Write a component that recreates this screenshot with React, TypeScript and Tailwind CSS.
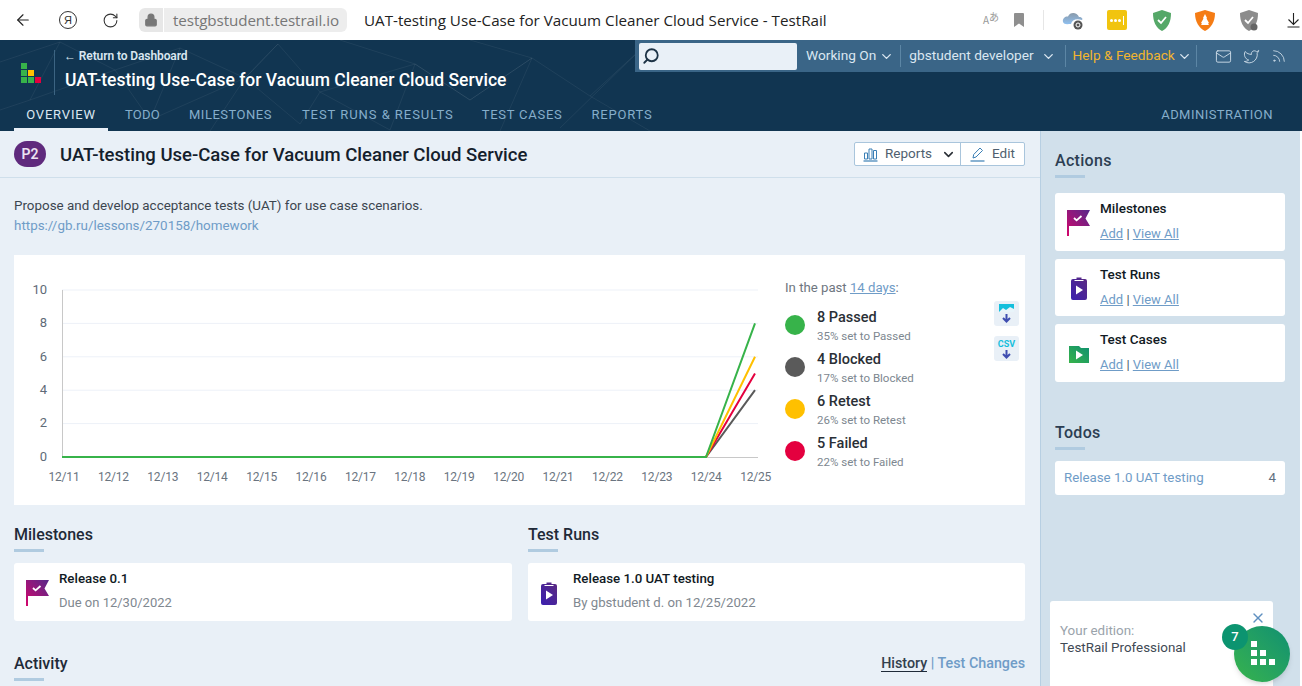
import React from "react";
import { ArrowLeft, RotateCw, Lock, ChevronDown, Search, Mail, Twitter, Rss, X } from "lucide-react";

const Flag = ({ id }: { id: string }) => (
  <svg width="23" height="26" viewBox="0 0 23 26" className="shrink-0">
    <defs>
      <linearGradient id={id} x1="0" y1="1" x2="1" y2="0">
        <stop offset="0" stopColor="#d4056c" />
        <stop offset="1" stopColor="#55298a" />
      </linearGradient>
    </defs>
    <path d="M0 0H23L18.5 8.500L23 16H2V26H0Z" fill={`url(#${id})`} />
    <path d="M7 8l2.600 2.400L14.500 6" fill="none" stroke="#fff" strokeWidth="1.800" />
  </svg>
);
const Clip = ({ id }: { id: string }) => (
  <svg width="16" height="23" viewBox="0 0 16 23" className="shrink-0">
    <defs>
      <linearGradient id={id} x1="0" y1="1" x2="1" y2="0">
        <stop offset="0" stopColor="#3b1fb0" />
        <stop offset="1" stopColor="#5b2a80" />
      </linearGradient>
    </defs>
    <path d="M2 2H5.500V0.500H10.500V2H14Q16 2 16 4V21Q16 23 14 23H2Q0 23 0 21V4Q0 2 2 2Z" fill={`url(#${id})`} />
    <rect x="3.500" y="3" width="9" height="1" fill="#fff" />
    <path d="M5 8.500L12 13L5 17.500Z" fill="#fff" />
  </svg>
);
const Folder = ({ id }: { id: string }) => (
  <svg width="20" height="17" viewBox="0 0 20 17" className="shrink-0">
    <defs>
      <linearGradient id={id} x1="0" y1="1" x2="1" y2="0">
        <stop offset="0" stopColor="#37b34a" />
        <stop offset="1" stopColor="#0f9070" />
      </linearGradient>
    </defs>
    <path d="M0 0H10L12 2H20V17H0Z" fill={`url(#${id})`} />
    <path d="M7 4.500L14 9L7 13.500Z" fill="#fff" />
  </svg>
);

const Heading = ({ children, side }: { children: React.ReactNode; side?: boolean }) => (
  <div>
    <div className={`translate-y-[1px] text-[16px] leading-[20px] font-medium ${side ? "tracking-[0.3px] text-[#2c3e52]" : "text-[#1f2a38]"}`}>{children}</div>
    <div className="mt-[5px] h-[3px] w-[30px] bg-[#b0cbe0]" />
  </div>
);

const ActionCard = ({ icon, title, short }: { icon: React.ReactNode; title: string; short?: boolean }) => (
  <div className={`flex items-start rounded-[3px] bg-white ${short ? "h-[57px]" : "h-[58px]"}`}>
    <div className="flex h-full w-[45px] shrink-0 items-center justify-center pt-[2px] pl-[2px]">{icon}</div>
    <div className="pt-[6px]">
      <div className="text-[13.500px] leading-[18px] font-medium text-[#111a24]">{title}</div>
      <div className="mt-[8px] text-[13px] leading-[18px] text-[#4a5a68]">
        <span className="text-[#6f9cc7] underline">Add</span> | <span className="text-[#6f9cc7] underline">View All</span>
      </div>
    </div>
  </div>
);

const days = ["12/11","12/12","12/13","12/14","12/15","12/16","12/17","12/18","12/19","12/20","12/21","12/22","12/23","12/24","12/25"];

const Chart = () => {
  const y = (v: number) => 202 - v * 16.7;
  return (
    <svg width="765" height="250" viewBox="0 0 765 250" className="shrink-0" fontFamily="Roboto, sans-serif">
      {[2, 4, 6, 8, 10].map((v) => (
        <line key={v} x1="48" x2="744" y1={y(v)} y2={y(v)} stroke="#edf1f8" />
      ))}
      <line x1="48.500" x2="48.500" y1="35" y2="202" stroke="#c8c8c8" />
      <line x1="48" x2="744" y1="202.500" y2="202.500" stroke="#c8c8c8" />
      {[0, 2, 4, 6, 8, 10].map((v) => (
        <text key={v} x="33" y={y(v) + 3.800} textAnchor="end" fontSize="13" fill="#5f6b78">{v}</text>
      ))}
      {days.map((d, i) => (
        <text key={d} x={50 + i * 49.4} y="226" textAnchor="middle" fontSize="12" letterSpacing="-0.200" fill="#6a7480">{d}</text>
      ))}
      <polyline points={`48,202 692,202 741,${y(4)}`} fill="none" stroke="#5a5a5a" strokeWidth="2" />
      <polyline points={`48,202 692,202 741,${y(5)}`} fill="none" stroke="#e4003f" strokeWidth="2" />
      <polyline points={`48,202 692,202 741,${y(6)}`} fill="none" stroke="#ffc000" strokeWidth="2" />
      <polyline points={`48,202 692,202 741,${y(8)}`} fill="none" stroke="#37b34a" strokeWidth="2" />
    </svg>
  );
};

const Legend = ({ color, title, sub }: { color: string; title: string; sub: string }) => (
  <div className="flex h-[42px] items-center">
    <div className="h-5 w-5 rounded-full" style={{ backgroundColor: color }} />
    <div className="ml-[12px] translate-y-[1px]">
      <div className="text-[14.500px] leading-[18px] font-medium text-[#2a2f36]">{title}</div>
      <div className="mt-[2px] text-[11.500px] leading-[14px] text-[#7d8790]">{sub}</div>
    </div>
  </div>
);

const Network = () => (
  <svg className="absolute inset-0 h-full w-full" viewBox="0 0 1302 91" preserveAspectRatio="none">
    <path
      d="M0 22L60 2L115 30L180 8L245 38L278 4L320 52L415 24L470 60L532 18L590 56L640 10L560 88M60 2L30 60L115 30L150 80L245 38L300 84L320 52L390 90L415 24L340 0M180 8L150 80M470 60L532 18L500 91M590 56L650 91M415 24L470 60M278 4L245 38M30 60L0 70M532 18L470 0M245 38L210 91"
      fill="none"
      stroke="#ffffff"
      strokeOpacity="0.06"
    />
  </svg>
);

const NavItem = ({ children, active, className }: { children: React.ReactNode; active?: boolean; className?: string }) => (
  <div className={`relative flex h-full items-center pb-[2px] text-[13px] whitespace-nowrap ${active ? "text-[#dce8f1]" : "text-[#86aecb]"} ${className ?? ""}`}>
    {children}
  </div>
);

const Sep = () => <div className="h-[22px] w-px bg-[#5c86a5]" />;

export default function App() {
  return (
    <div className="flex h-[686px] w-[1302px] flex-col overflow-hidden bg-white font-['Roboto',sans-serif]">
      {/* browser bar */}
      <div className="flex h-10 shrink-0 items-center bg-white font-['Open_Sans',sans-serif] text-[#333]">
        <ArrowLeft size={18} strokeWidth={1.5} className="ml-[14px] text-[#222]" />
        <div className="ml-[27px] flex h-[18px] w-[18px] items-center justify-center rounded-full border border-[#333] font-['Liberation_Sans',sans-serif] text-[11px] leading-none">Я</div>
        <RotateCw size={17} strokeWidth={1.5} className="ml-[25px] text-[#333]" />
        <div className="ml-[20px] flex h-6 w-[24px] items-center justify-center rounded-l-[6px] bg-[#e7e7e7]">
          <Lock size={14} fill="#777" strokeWidth={2} className="text-[#777]" />
        </div>
        <div className="ml-[1px] flex h-6 w-[183px] items-center rounded-r-[6px] bg-[#ededed] pl-[9px] text-[15.200px] tracking-[-0.100px] whitespace-nowrap text-[#777]">testgbstudent.testrail.io</div>
        <div className="ml-[17px] text-[15.200px] whitespace-nowrap text-[#222]">UAT-testing Use-Case for Vacuum Cleaner Cloud Service - TestRail</div>
        <div className="flex-1" />
        <div className="flex w-[17px] items-end font-['Noto_Sans_CJK_JP',sans-serif] leading-none text-[#999]">
          <span className="text-[10px]">A</span>
          <span className="-mt-[5px] mb-[3px] text-[10px]">あ</span>
        </div>
        <svg width="10" height="14" viewBox="0 0 10 14" className="ml-[14px]"><path d="M0 1Q0 0 1 0H9Q10 0 10 1V14L5 10.500L0 14Z" fill="#8f8f8f" /></svg>
        <div className="ml-[19px] h-[20px] w-px bg-[#e6e6e6]" />
        <svg width="22" height="20" viewBox="0 0 22 20" className="ml-[18px]">
          <defs>
            <linearGradient id="cl" x1="0" y1="0" x2="0" y2="1">
              <stop offset="0" stopColor="#8a9aaa" />
              <stop offset="1" stopColor="#8fc0f0" />
            </linearGradient>
          </defs>
          <path d="M1 12C0 8 4 6 6 6.500C8 1.500 15 2 17 7C20 7 21 9 20 10C14 8 10 10 9 14C6 14 2 15 1 12Z" fill="url(#cl)" />
          <circle cx="16" cy="15" r="4.500" fill="#555" />
          <circle cx="16" cy="15" r="2" fill="none" stroke="#fff" />
        </svg>
        <div className="ml-[23px] flex h-[20px] w-[20px] items-center justify-center gap-[1px] rounded-[2px] bg-[#f1c40f]">
          <span className="h-[3px] w-[3px] rounded-full bg-white" />
          <span className="h-[3px] w-[3px] rounded-full bg-white" />
          <span className="h-[3px] w-[3px] rounded-full bg-white" />
          <span className="ml-[1px] h-[9px] w-px bg-white" />
        </div>
        <svg width="20" height="21" viewBox="0 0 20 21" className="ml-[25px]">
          <path d="M1 3L10 0L19 3C19 12 16 18 10 21C4 18 1 12 1 3Z" fill="#55a868" />
          <path d="M6 10l3 3 5-6" fill="none" stroke="#fff" strokeWidth="1.800" />
        </svg>
        <svg width="20" height="21" viewBox="0 0 20 21" className="ml-[23px]">
          <path d="M0 3L10 0L20 3C20 12 16 18 10 21C4 18 0 12 0 3Z" fill="#f57c14" />
          <path d="M10 4L12 8L11.500 8.500L14 13L13 13.500L14 15H6L7 13.500L6 13L8.500 8.500L8 8Z" fill="#fff" />
        </svg>
        <svg width="20" height="21" viewBox="0 0 20 21" className="ml-[24px]">
          <path d="M1 3L10 0L19 3C19 12 16 18 10 21C4 18 1 12 1 3Z" fill="#8c8c8c" />
          <path d="M6 10l3 3 5-6" fill="none" stroke="#fff" strokeWidth="1.800" />
          <circle cx="15" cy="17" r="3.500" fill="#666" />
        </svg>
        <svg width="13" height="16" viewBox="0 0 13 16" className="mr-[2px] ml-[28px]">
          <path d="M6.500 1V12M1.500 7.500L6.500 12.500L11.500 7.500M0.500 15H12.500" fill="none" stroke="#222" strokeWidth="1.100" />
        </svg>
      </div>

      {/* app header */}
      <div className="relative h-[91px] shrink-0 bg-[#113551]">
        <Network />
        <div className="relative flex h-[60px] items-start">
          <div className="flex w-[635px] items-start">
            <div className="mt-[23px] ml-[21px] grid w-[20px] grid-cols-3 gap-[1px]">
              <span className="h-[6px] w-[6px] bg-[#37b34a]" />
              <span className="h-[6px] w-[6px]" />
              <span className="h-[6px] w-[6px]" />
              <span className="h-[6px] w-[6px] bg-[#37b34a]" />
              <span className="h-[6px] w-[6px] bg-[#ffc000]" />
              <span className="h-[6px] w-[6px]" />
              <span className="h-[6px] w-[6px] bg-[#37b34a]" />
              <span className="h-[6px] w-[6px] bg-[#37b34a]" />
              <span className="h-[6px] w-[6px] bg-[#e4003f]" />
            </div>
            <div className="mt-[10px] ml-[13px] h-[45px] w-px bg-[#3c6482]" />
            <div className="ml-[10px] pt-[9px]">
              <div className="-ml-[1px] text-[12px] leading-[14px] font-semibold tracking-[-0.100px] text-[#d9e6f0]">← Return to Dashboard</div>
              <div className="mt-[6px] text-[17.500px] leading-[22px] font-medium whitespace-nowrap text-white">UAT-testing Use-Case for Vacuum Cleaner Cloud Service</div>
            </div>
          </div>
          <div className="flex h-8 flex-1 items-center bg-[#3a6587] text-[13.700px] text-[#dbe7f1]">
            <div className="ml-[4px] flex h-[27px] w-[158px] items-center rounded-[2px] bg-[#e9f0f7] pl-[3px]">
              <Search size={18} strokeWidth={2.4} className="-scale-x-100 text-[#1d3346]" />
            </div>
            <span className="ml-[9px] pb-[2px] whitespace-nowrap">Working On</span>
            <ChevronDown size={15} strokeWidth={2.2} className="ml-[3px]" />
            <div className="ml-[6px]"><Sep /></div>
            <span className="ml-[8px] pb-[2px] whitespace-nowrap">gbstudent developer</span>
            <ChevronDown size={15} strokeWidth={2.2} className="ml-[7px]" />
            <div className="ml-[9px]"><Sep /></div>
            <span className="ml-[7px] pb-[2px] whitespace-nowrap text-[#f2b52e]">Help &amp; Feedback</span>
            <ChevronDown size={15} strokeWidth={2.2} className="ml-[2px]" />
            <div className="ml-[4px]"><Sep /></div>
            <Mail size={17} strokeWidth={1.2} className="ml-[18px]" />
            <Twitter size={17} strokeWidth={1.2} className="ml-[11px]" />
            <Rss size={16} strokeWidth={1.2} className="ml-[11px]" />
          </div>
        </div>
        <div className="relative flex h-[31px] items-center pl-[14px]">
          <NavItem active className="w-[94px] justify-center tracking-[0.8px]">
            OVERVIEW
            <span className="absolute inset-x-0 bottom-0 h-[3px] bg-[#e9f0f7]" />
          </NavItem>
          <NavItem className="ml-[17px] tracking-[0.25px]">TODO</NavItem>
          <NavItem className="ml-[29px] tracking-[0.5px]">MILESTONES</NavItem>
          <NavItem className="ml-[30px] tracking-[0.95px]">TEST RUNS &amp; RESULTS</NavItem>
          <NavItem className="ml-[28px] tracking-[0.75px]">TEST CASES</NavItem>
          <NavItem className="ml-[29px] tracking-[0.77px]">REPORTS</NavItem>
          <div className="flex-1" />
          <NavItem className="mr-[29px] tracking-[0.46px]">ADMINISTRATION</NavItem>
        </div>
      </div>

      {/* body */}
      <div className="relative flex min-h-0 flex-1">
        <div className="w-[1040px] shrink-0 overflow-hidden bg-[#e9f0f7]">
          <div className="flex h-[47px] items-center border-b border-[#cfdfeb] pr-[15px] pl-[14px]">
            <div className="flex h-[26px] w-[32px] items-center justify-center rounded-full bg-[#5f2a7d] text-[14px] font-semibold text-[#ece3f2]">P2</div>
            <div className="ml-[14px] pt-[4px] text-[18.550px] font-medium whitespace-nowrap text-[#14202c]">UAT-testing Use-Case for Vacuum Cleaner Cloud Service</div>
            <div className="flex-1" />
            <div className="flex h-6 items-center rounded-[2px] border border-[#a9c5dc] bg-white text-[13.500px] text-[#4f5f6f]">
              <div className="flex h-full w-[106px] items-center border-r border-[#a9c5dc] pl-[8px]">
                <svg width="15" height="16" viewBox="0 0 15 16" className="shrink-0">
                  <path d="M1.500 7H4.500V13H1.500ZM6 3H9V13H6ZM10.500 4.500H13.500V13H10.500Z" fill="none" stroke="#3b7fb5" />
                  <path d="M0.500 15H14.500" stroke="#3b7fb5" strokeWidth="1.200" />
                </svg>
                <span className="ml-[7px] pb-[2px]">Reports</span>
                <ChevronDown size={15} strokeWidth={2.5} className="ml-[9px] text-[#2a2f36]" />
              </div>
              <div className="flex h-full w-[63px] items-center pl-[9px]">
                <svg width="15" height="16" viewBox="0 0 15 16" className="shrink-0">
                  <path d="M3 12L3.700 8.500L10 2L12.500 4.500L6 11Z" fill="none" stroke="#3b7fb5" />
                  <path d="M0.500 15H14.500" stroke="#3b7fb5" strokeWidth="1.200" />
                </svg>
                <span className="ml-[7px] pb-[2px]">Edit</span>
              </div>
            </div>
          </div>

          <div className="pr-[15px] pl-[14px]">
            <div className="pt-[18px] text-[13.400px] leading-[20px] text-[#3c4650]">
              Propose and develop acceptance tests (UAT) for use case scenarios.
              <div className="text-[#6f9cc7]">https://gb.ru/lessons/270158/homework</div>
            </div>

            <div className="mt-[19px] flex h-[250px] bg-white">
              <Chart />
              <div className="w-[215px] shrink-0 pl-[6px]">
                <div className="pt-[25px] text-[13.200px] leading-[16px] text-[#6e7680]">
                  In the past <span className="text-[#6f9cc7] underline">14 days</span>:
                </div>
                <div className="mt-[8px]">
                  <Legend color="#37b34a" title="8 Passed" sub="35% set to Passed" />
                  <Legend color="#5a5a5a" title="4 Blocked" sub="17% set to Blocked" />
                  <Legend color="#ffc000" title="6 Retest" sub="26% set to Retest" />
                  <Legend color="#e4003f" title="5 Failed" sub="22% set to Failed" />
                </div>
              </div>
              <div className="flex flex-col gap-[10px] pt-[46px]">
                <div className="flex h-[25px] w-[25px] flex-col items-center justify-center rounded-[3px] bg-[#e9f0f7]">
                  <svg width="17" height="9" viewBox="0 0 17 9"><rect width="15" height="8" x="1" fill="#15bfdc" /><path d="M1 8L5 4L8 6L12 3L16 5V8Z" fill="#e8f4fa" /></svg>
                  <svg width="11" height="10" viewBox="0 0 11 10"><path d="M5.500 1V8M2 5l3.500 3.500L9 5" fill="none" stroke="#3f4db0" strokeWidth="2" /></svg>
                </div>
                <div className="flex h-[25px] w-[25px] flex-col items-center justify-center rounded-[3px] bg-[#e9f0f7]">
                  <span className="text-[9px] leading-[10px] font-bold text-[#15bfdc]">CSV</span>
                  <svg width="11" height="10" viewBox="0 0 11 10"><path d="M5.500 1V8M2 5l3.500 3.500L9 5" fill="none" stroke="#3f4db0" strokeWidth="2" /></svg>
                </div>
              </div>
            </div>

            <div className="mt-[19px] grid grid-cols-[498px_497px] gap-x-[16px]">
              <div>
                <Heading>Milestones</Heading>
                <div className="mt-[11px] flex h-[58px] items-start rounded-[3px] bg-white">
                  <div className="flex h-full w-[45px] shrink-0 items-center pt-[2px] pl-[12px]"><Flag id="f1" /></div>
                  <div className="pt-[7px]">
                    <div className="text-[13.300px] leading-[18px] font-medium text-[#111a24]">Release 0.1</div>
                    <div className="mt-[6px] text-[13px] leading-[18px] text-[#7f8890]">Due on 12/30/2022</div>
                  </div>
                </div>
              </div>
              <div>
                <Heading>Test Runs</Heading>
                <div className="mt-[11px] flex h-[58px] items-start rounded-[3px] bg-white">
                  <div className="flex h-full w-[45px] shrink-0 items-center pt-[2px] pl-[13px]"><Clip id="c1" /></div>
                  <div className="pt-[7px]">
                    <div className="text-[13.300px] leading-[18px] font-medium text-[#111a24]">Release 1.0 UAT testing</div>
                    <div className="mt-[6px] text-[13.200px] leading-[18px] text-[#7f8890]">By gbstudent d. on 12/25/2022</div>
                  </div>
                </div>
              </div>
            </div>

            <div className="mt-[32px] flex items-start justify-between">
              <Heading>Activity</Heading>
              <div className="pt-[1px] text-[14.300px] leading-[18px] font-medium text-[#6f9cc7]">
                <span className="border-b border-[#1f2a38] text-[#33404e]">History</span> | Test Changes
              </div>
            </div>
          </div>
        </div>

        <div className="flex-1 border-r-2 border-l border-r-white border-l-[#b7cfe2] bg-[#d1e0eb] pt-[19px] pr-[15px] pl-[14px]">
          <Heading side>Actions</Heading>
          <div className="mt-[15px] flex flex-col gap-2">
            <ActionCard icon={<Flag id="f2" />} title="Milestones" />
            <ActionCard icon={<Clip id="c2" />} title="Test Runs" short />
            <ActionCard icon={<Folder id="d2" />} title="Test Cases" />
          </div>
          <div className="mt-[40px]"><Heading side>Todos</Heading></div>
          <div className="mt-[11px] flex h-[34px] items-center justify-between rounded-[3px] bg-white pr-[9px] pl-[9px] text-[13.300px] text-[#6f9cc7]">
            <span>Release 1.0 UAT testing</span>
            <span className="text-[#5f7080]">4</span>
          </div>
        </div>

        {/* edition popup */}
        <div className="absolute top-[470px] left-[1050px] h-[90px] w-[223px] rounded-t-[3px] bg-white pt-[21px] pl-[10px] text-[13.400px] leading-[17px]">
          <div className="text-[#9aa3ab]">Your edition:</div>
          <div className="text-[#3f4a55]">TestRail Professional</div>
          <X size={16} strokeWidth={2} className="absolute top-[9px] right-[7px] text-[#5f8fc0]" />
        </div>
        <div className="absolute top-[495px] left-[1234px] h-[56px] w-[56px] rounded-full bg-gradient-to-tr from-[#37b34a] to-[#0f9070] shadow-md">
          <div className="absolute top-[15px] left-[17px] grid grid-cols-3 gap-[3px]">
            <span className="h-[6px] w-[6px] bg-white" />
            <span className="h-[6px] w-[6px]" />
            <span className="h-[6px] w-[6px]" />
            <span className="h-[6px] w-[6px] bg-white" />
            <span className="h-[6px] w-[6px] bg-white" />
            <span className="h-[6px] w-[6px]" />
            <span className="h-[6px] w-[6px] bg-white" />
            <span className="h-[6px] w-[6px] bg-white" />
            <span className="h-[6px] w-[6px] bg-white" />
          </div>
        </div>
        <div className="absolute top-[493px] left-[1222px] flex h-[26px] w-[26px] items-center justify-center rounded-full bg-[#0c9470] text-[13px] font-medium text-white">7</div>
      </div>
    </div>
  );
}
